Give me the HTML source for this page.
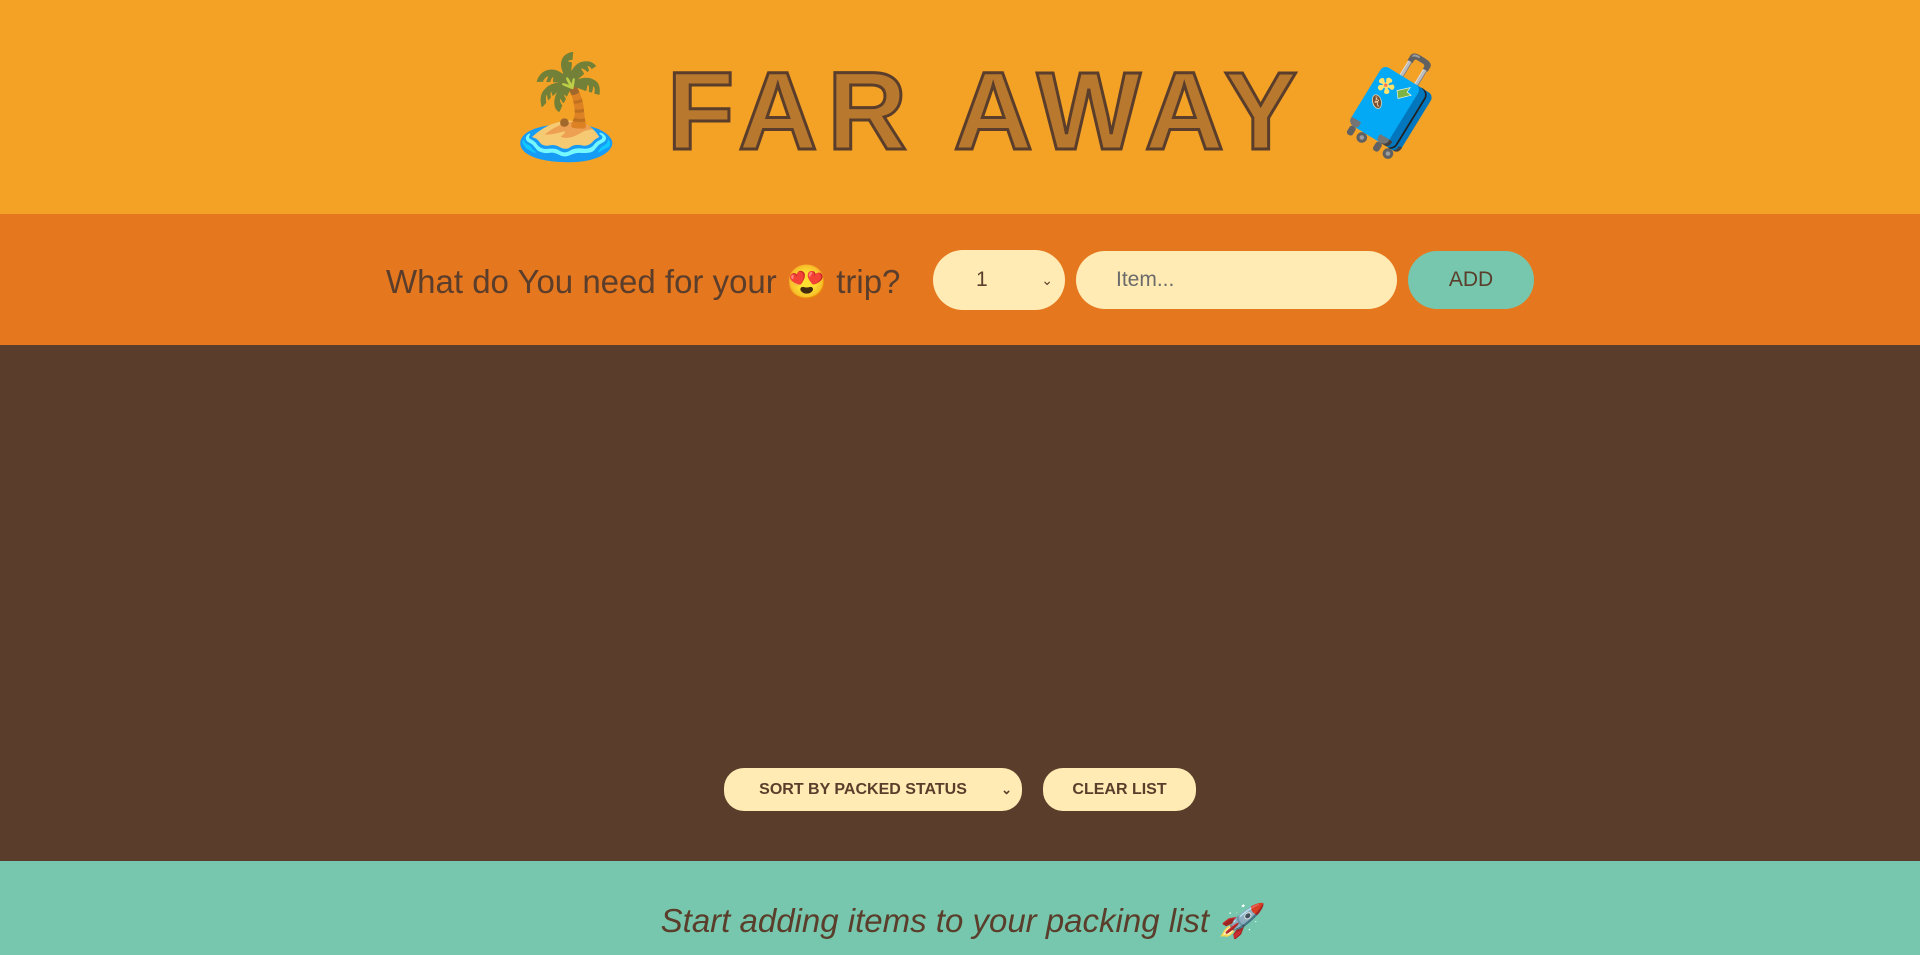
<!DOCTYPE html>
<html><head><meta charset="utf-8"><style>
*{margin:0;padding:0;box-sizing:border-box}
html,body{width:1920px;height:955px;overflow:hidden;font-family:"Liberation Sans",sans-serif;color:#5a3e2b;background:#76c7ad}
.h{height:214px;background:#f4a226;position:relative}
.e{position:absolute;font-family:"Noto Color Emoji","DejaVu Sans",sans-serif}
.t{position:absolute;left:667px;top:50px;font-size:110px;line-height:124px;font-weight:bold;color:#b8782e;-webkit-text-stroke:3px #5a3e2b;letter-spacing:10px;white-space:nowrap}
.f{height:131px;background:#e5771f;position:relative}
.q{position:absolute;left:386px;top:38px;font-size:33px;line-height:60px}
.box{position:absolute;background:#ffebb3;border-radius:30px;font-size:21px;display:flex;align-items:center}
.l{height:516px;background:#5a3e2b;position:relative}
.s{position:absolute;background:#ffebb3;border-radius:20px;font-size:16px;font-weight:bold;display:flex;align-items:center;justify-content:center;color:#5a3e2b}
.ft{height:94px;background:#76c7ad;text-align:center;font-style:italic;font-size:33px;line-height:120px;overflow:hidden}
</style></head><body>
<div class="h">
<div class="e" style="left:504px;top:50px;font-size:100px;line-height:115px">🏝️</div>
<div class="t">FAR AWAY</div>
<div class="e" style="left:1333px;top:50px;font-size:96px;line-height:115px">🧳</div>
</div>
<div class="f">
<div class="q">What do You need for your 😍 trip?</div>
<div class="box" style="left:933px;top:36px;width:132px;height:60px;padding-left:43px">1<span style="position:absolute;right:12px;font-size:14px">⌄</span></div>
<div class="box" style="left:1076px;top:37px;width:321px;height:58px;padding-left:40px;color:#6b6b6b">Item...</div>
<div class="box" style="left:1408px;top:37px;width:126px;height:58px;background:#76c7ad;justify-content:center">ADD</div>
</div>
<div class="l">
<div class="s" style="left:724px;top:423px;width:298px;height:43px;padding-right:20px">SORT BY PACKED STATUS<span style="position:absolute;right:10px;font-size:13px">⌄</span></div>
<div class="s" style="left:1043px;top:423px;width:153px;height:43px">CLEAR LIST</div>
</div>
<div class="ft">Start adding items to your packing list 🚀</div>
</body></html>
